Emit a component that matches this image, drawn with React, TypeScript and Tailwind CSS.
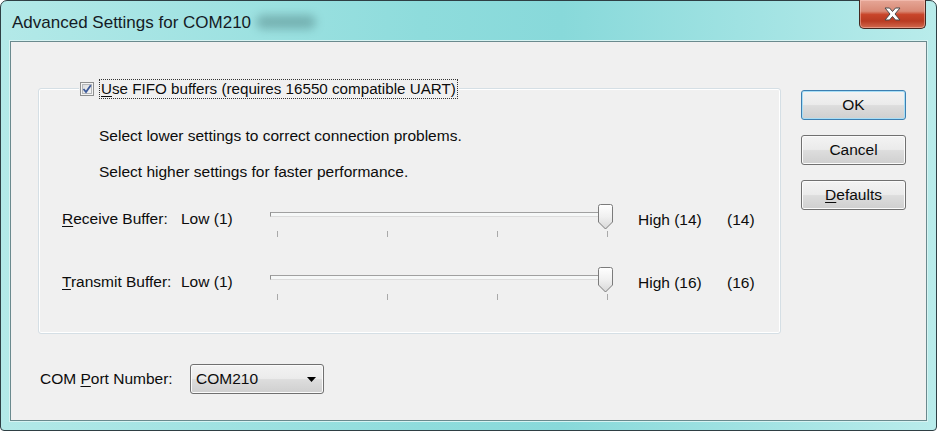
import React from "react";

const font = { fontFamily: '"Liberation Sans", Arial, sans-serif' };

function Check() {
  return (
    <svg width="14" height="14" viewBox="0 0 14 14" className="block">
      <defs>
        <linearGradient id="cbg" x1="0" y1="0" x2="1" y2="1">
          <stop offset="0" stopColor="#d9dbdd" />
          <stop offset="1" stopColor="#f7f7f7" />
        </linearGradient>
      </defs>
      <rect x="0.5" y="0.5" width="13" height="13" fill="#f4f4f4" stroke="#8e8f8f" />
      <rect x="2.5" y="2.5" width="9" height="9" fill="url(#cbg)" stroke="#b4b6b8" />
      <path d="M3.5 7 L6 10 L10.8 3.2" fill="none" stroke="#3c5a9a" strokeWidth="1.8" />
    </svg>
  );
}

function Thumb() {
  return (
    <svg width="15" height="26" viewBox="0 0 15 26" className="block">
      <defs>
        <linearGradient id="thg" x1="0" y1="0" x2="0" y2="1">
          <stop offset="0" stopColor="#ffffff" />
          <stop offset="0.5" stopColor="#f0f0f0" />
          <stop offset="1" stopColor="#d8d8d8" />
        </linearGradient>
      </defs>
      <path
        d="M0.5 2.5 Q0.5 0.5 2.5 0.5 L12.5 0.5 Q14.5 0.5 14.5 2.5 L14.5 18 L7.5 25 L0.5 18 Z"
        fill="url(#thg)"
        stroke="#7b7b7b"
      />
    </svg>
  );
}

function Slider() {
  const ticks = [7, 117, 227, 337];
  return (
    <div className="relative h-[34px] w-[343px]">
      <div className="absolute left-0 top-[8px] h-[5px] w-[340px] border-l border-t border-b border-l-[#8f8f8f] border-t-[#a0a0a0] border-b-[#dcdcdc] bg-[#f6f8f8]" />
      {ticks.map((t) => (
        <div key={t} className="absolute top-[27px] h-[6px] w-px bg-[#a9a9a9]" style={{ left: t }} />
      ))}
      <div className="absolute left-[328px] top-0">
        <Thumb />
      </div>
    </div>
  );
}

function SliderRow({ label, mn, high, val }: { label: React.ReactNode; mn: string; high: string; val: string }) {
  return (
    <div className="flex items-start h-[34px]">
      <div className="w-[119px] leading-[20px] mt-[5px]">{label}</div>
      <div className="w-[89px] leading-[20px] mt-[5px]">{mn}</div>
      <Slider />
      <div className="ml-[25px] w-[89px] leading-[20px] mt-[6px]">{high}</div>
      <div className="leading-[20px] mt-[6px]">{val}</div>
    </div>
  );
}

function Btn({ children, focused }: { children: React.ReactNode; focused?: boolean }) {
  return (
    <div
      className={
        "h-[30px] w-[105px] rounded-[3px] border flex items-center justify-center text-[15.5px] bg-[linear-gradient(180deg,#f3f3f3_0%,#ebebeb_48%,#dddddd_52%,#cfcfcf_100%)] " +
        (focused
          ? "border-[#3c7fb1] shadow-[inset_0_0_0_1px_#a8def6]"
          : "border-[#707070] shadow-[inset_0_0_0_1px_#fbfbfb]")
      }
    >
      {children}
    </div>
  );
}

export default function App() {
  return (
    <div className="w-[937px] h-[432px] bg-white overflow-hidden text-[#0c0c0c]" style={font}>
      <div className="w-[937px] h-[431px] rounded-t-[7px] rounded-b-[4px] border border-[#2e3f44] bg-[linear-gradient(90deg,#b3e9e8_0%,#8edcdc_45%,#88d9da_60%,#b9eceb_100%)] flex flex-col">
        {/* title bar */}
        <div className="relative h-[40px] flex items-center pl-[11px] shrink-0">
          <div className="absolute left-[255px] top-[14px] h-[14px] w-[60px] rounded-full bg-[#3f6d6e] opacity-40 blur-[5px]" />
          <span className="relative text-[17px] text-[#151b25] mt-[4px]">Advanced Settings for COM210</span>
          <div className="absolute right-[10px] top-[-1px] h-[29px] w-[67px] rounded-b-[5px] border border-[#432820] border-t-0 bg-[linear-gradient(180deg,#e6a797_0%,#d98a76_40%,#c8452a_52%,#b93b22_75%,#d26a4e_100%)] shadow-[inset_0_0_0_1px_rgba(255,210,200,0.45)] flex items-center justify-center">
            <svg width="19" height="14" viewBox="0 0 19 14">
              <path
                d="M2 1 L6.5 1 L9.5 4.5 L12.5 1 L17 1 L12 7 L17 13 L12.5 13 L9.5 9.5 L6.5 13 L2 13 L7 7 Z"
                fill="#ffffff"
                stroke="#4a4a4a"
                strokeWidth="1"
                strokeLinejoin="round"
              />
            </svg>
          </div>
        </div>
        {/* client area */}
        <div className="ml-[9px] mr-[9px] mb-[9px] h-[380px] border border-[#6a8a8e] bg-[#f0f0f0] shadow-[0_0_0_1px_#d6f3f2] text-[15.5px]">
          <div className="flex pl-[27px] pt-[46px]">
            {/* group box */}
            <div className="relative w-[743px] h-[246px] rounded-[3px] border border-[#d5dfe5] shadow-[inset_0_0_0_1px_#ffffff]">
              <div className="absolute left-[40px] top-[-10px] flex items-center bg-[#f0f0f0] pr-[1px]">
                <div className="pl-[1px]">
                  <Check />
                </div>
                <div className="ml-[5px] h-[20px] leading-[18px] border border-dotted border-[#333] px-[1px] text-[15.2px]">
                  <span className="underline underline-offset-2">U</span>se FIFO buffers (requires 16550 compatible UART)
                </div>
              </div>
              <div className="pl-[60px] pt-[37px] flex flex-col">
                <div className="leading-[20px]">Select lower settings to correct connection problems.</div>
                <div className="leading-[20px] mt-[16px]">Select higher settings for faster performance.</div>
              </div>
              <div className="pl-[23px] pt-[22px] flex flex-col gap-[29px]">
                <SliderRow
                  label={
                    <>
                      <span className="underline underline-offset-2">R</span>eceive Buffer:
                    </>
                  }
                  mn="Low (1)"
                  high="High (14)"
                  val="(14)"
                />
                <SliderRow
                  label={
                    <>
                      <span className="underline underline-offset-2">T</span>ransmit Buffer:
                    </>
                  }
                  mn="Low (1)"
                  high="High (16)"
                  val="(16)"
                />
              </div>
            </div>
            {/* buttons */}
            <div className="ml-[20px] mt-[2px] flex flex-col gap-[15px]">
              <Btn focused>OK</Btn>
              <Btn>Cancel</Btn>
              <Btn>
                <span>
                  <span className="underline underline-offset-2">D</span>efaults
                </span>
              </Btn>
            </div>
          </div>
          {/* com port row */}
          <div className="flex items-center pl-[29px] mt-[30px]">
            <div className="w-[150px]">
              COM <span className="underline underline-offset-2">P</span>ort Number:
            </div>
            <div className="h-[30px] w-[134px] rounded-[3px] border border-[#707070] shadow-[inset_0_0_0_1px_#fbfbfb] bg-[linear-gradient(180deg,#f3f3f3_0%,#ebebeb_48%,#dddddd_52%,#cfcfcf_100%)] flex items-center pl-[5px] pr-[7px] justify-between">
              <span>COM210</span>
              <svg width="9" height="5" viewBox="0 0 9 5">
                <path d="M0 0 L9 0 L4.5 5 Z" fill="#000" />
              </svg>
            </div>
          </div>
        </div>
      </div>
    </div>
  );
}
